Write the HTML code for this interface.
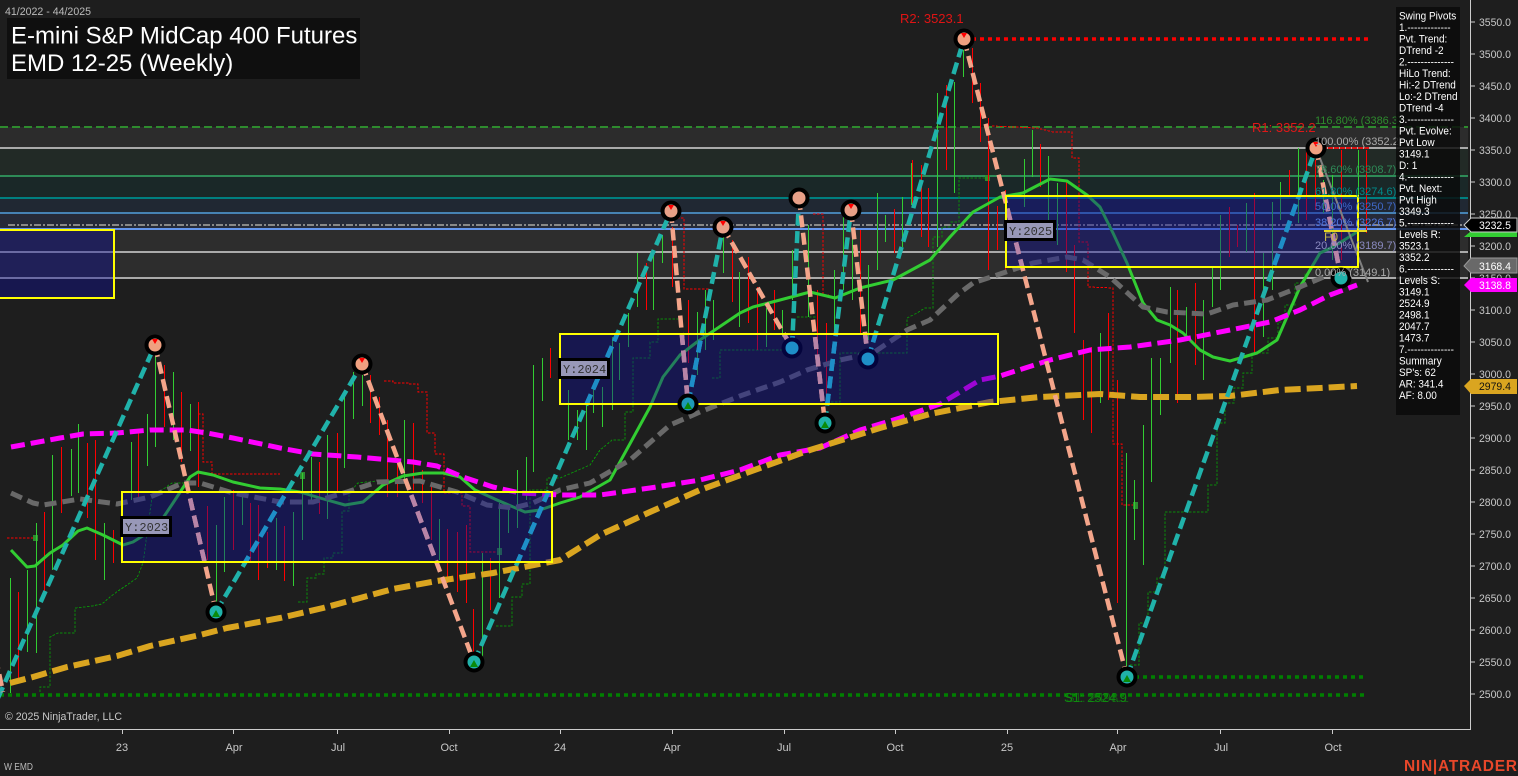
<!DOCTYPE html>
<html lang="en"><head><meta charset="utf-8"><title>EMD 12-25 (Weekly)</title>
<style>html,body{margin:0;padding:0;background:#1e1e1e;width:1518px;height:776px;overflow:hidden}svg{display:block;font-family:"Liberation Sans",Arial,sans-serif}</style></head>
<body>
<svg width="1518" height="776" viewBox="0 0 1518 776" xmlns="http://www.w3.org/2000/svg">
<defs>
<clipPath id="boxes"><rect x="0" y="230" width="114" height="68"/><rect x="122" y="492" width="430" height="70"/><rect x="560" y="334" width="438" height="70"/><rect x="1006" y="196" width="352" height="71"/></clipPath>
<path id="zt" d="M-2 698L155 345M216 612L362 364M474 662L671 211M688 404L723 227M792 348L799 198M825 423L851 210M868 359L964 39M1127 677L1316 148" fill="none" stroke-width="4.500" stroke-dasharray="12 5.500"/>
<path id="zs" d="M-8 640L3 692M155 345L216 612M362 364L474 662M671 211L688 404M723 227L792 348M799 198L825 423M851 210L868 359M964 39L1127 677M1316 148L1341 278" fill="none" stroke-width="4.500" stroke-dasharray="12 5.500"/>
</defs>
<rect width="1518" height="776" fill="#1e1e1e"/>
<!-- fib bands -->
<rect x="0" y="127" width="1468" height="21" fill="#2c2c2c"/>
<rect x="0" y="148" width="1468" height="28" fill="#222a26"/>
<rect x="0" y="176" width="1468" height="22" fill="#1a2828"/>
<rect x="0" y="198" width="1468" height="15" fill="#202833"/>
<rect x="0" y="213" width="1468" height="16" fill="#262a38"/>
<rect x="0" y="229" width="1468" height="49" fill="#2d2d2d"/>
<g fill="none" shape-rendering="crispEdges">
<path d="M0 127H1468" stroke="#2e8b2e" stroke-width="2" stroke-dasharray="8 4"/>
<path d="M0 148H1468" stroke="#aaa" stroke-width="2"/>
<path d="M0 176H1468" stroke="#2e8b57" stroke-width="2"/>
<path d="M0 198H1468" stroke="#008080" stroke-width="2"/>
<path d="M0 213H1468" stroke="#4682b4" stroke-width="2"/>
<path d="M8 225H1468" stroke="#888" stroke-width="2" stroke-dasharray="7 2 2 2"/>
<path d="M0 229H1468" stroke="#6495ed" stroke-width="2"/>
<path d="M0 252H1468" stroke="#aaa" stroke-width="2"/>
<path d="M0 278H1468" stroke="#aaa" stroke-width="2"/>
</g>
<!-- trailing stops -->
<g fill="none" stroke-width="1" stroke-dasharray="2.500 1.500" shape-rendering="crispEdges">
<path stroke="#0a8a0a" d="M40 692V687H50V637L58 633H75V608L92 606 102 604 110 597 118 591 127 585 137 578 143 563 152 497 172 483H190M298 602H307V578H316V574H324V558H333V553H342V511H349V493L358 483 377 481M496 626H512V597H522V584H530V553 490H547V478H560L590 465 600 450 612 440H625V412H633V358H650V342H658V319H678M712 378H720V350H782M797 317H817M827 402H840V353H907V318L917 313 925 308H933V237H942V227H951V222H959V178H988M1130 665H1139V623H1148V592H1157V578H1165V512H1208V485H1217V423H1225V403H1234V388H1243V373H1252V353H1268V338H1278V322H1285V305H1295V283H1305V273"/>
<path stroke="#ff0000" d="M7 538H33M198 414H203V462H212V474H280M384 381H393V383H409V384H418V392H427V433H435V454H444V493H462V506H470V552H498M673 218H684V289H710M813 214H823V295H829M992 126L1037 128 1045 130 1053 132H1072V158H1079V242H1088V287L1113 288V444H1122V505H1134"/>
</g>
<path d="M33 535h5v6h-5zM300 472h5v7h-5zM1133 502h5v7h-5zM497 548h5v7h-5zM985 175h5v6h-5z" fill="#2e8b2e"/>
<!-- bars -->
<g fill="none" stroke-width="1" shape-rendering="crispEdges">
<path stroke="#32cd32" d="M10.500 578V693M27.500 570V652M36.500 523V653M52.500 455V570M71.500 449V496M78.500 424V493M104.500 523V580M131.500 442V500M147.500 414V466M155.500 350V447M173.500 372V440M190.500 404V451M216.500 525V603M224.500 497V572M242.500 495V525M276.500 518V570M293.500 512V586M302.500 473V540M311.500 457V500M327.500 435V519M344.500 392V468M353.500 372V419M362.500 375V406M404.500 420V480M439.500 519V560M482.500 553V657M499.500 503V598M508.500 510V533M517.500 470V528M526.500 457V500M533.500 365V472M542.500 358V401M568.500 390V440M577.500 410V440M586.500 400V450M593.500 387V413M602.500 387V427M612.500 337V410M619.500 343V380M628.500 313V347M637.500 253V307M653.500 250V310M662.500 235V263M697.500 312V375M705.500 290V350M713.500 300V340M723.500 233V273M739.500 272V327M766.500 308V347M782.500 310V337M792.500 250V300M808.500 225V317M834.500 270V330M843.500 217V290M852.500 230V300M868.500 265V340M877.500 193V270M885.500 215V242M902.500 197V247M911.500 163V205M937.500 93V247M954.500 82V193M963.500 50V77M1024.500 159V207M1032.500 130V177M1048.500 156V220M1057.500 183V245M1100.500 333V403M1126.500 453V667M1134.500 480V540M1143.500 425V565M1151.500 358V482M1160.500 358V415M1170.500 287V363M1186.500 307V340M1203.500 300V380M1212.500 268V307M1220.500 215V290M1246.500 203V252M1263.500 253V337M1272.500 202V290M1280.500 182V220M1298.500 148V223M1323.500 180V213M1332.500 175V260M1358.500 150V253"/>
<path stroke="#ff0000" d="M18.500 592V680M44.500 512V597M61.500 447V513M87.500 443V518M95.500 440V560M113.500 530V563M138.500 432V497M164.500 365V427M181.500 392V462M198.500 402V487M207.500 506V560M233.500 490V550M250.500 503V562M258.500 505V580M267.500 532V568M284.500 526V581M319.500 462V514M337.500 433V492M370.500 375V423M379.500 397V435M387.500 420V497M397.500 458V497M413.500 423V490M422.500 470V503M431.500 483V540M447.500 529V583M457.500 532V592M466.500 525V603M473.500 609V653M490.500 558V610M550.500 348V378M559.500 360V400M646.500 263V310M672.500 227V287M688.500 300V363M732.500 240V302M748.500 257V323M757.500 287V350M774.500 290V330M817.500 290V360M826.500 323V400M860.500 230V333M894.500 209V253M912.500 160V207M921.500 165V237M928.500 188V247M946.500 85V170M972.500 48V103M980.500 83V142M988.500 118V270M997.500 206V250M1005.500 190V270M1040.500 144V187M1066.500 182V272M1074.500 245V333M1083.500 340V420M1091.500 347V433M1108.500 313V400M1117.500 380V603M1177.500 290V403M1195.500 283V365M1229.500 207V257M1237.500 225V247M1254.500 193V353M1289.500 170V195M1306.500 150V220M1315.500 160V210M1341.500 150V260M1366.500 150V233"/>
</g>
<!-- moving averages -->
<g fill="none" stroke-linejoin="round">
<path stroke="#32cd32" stroke-width="3" d="M11 550L27 567 35 566 50 553 63 545 78 531 87 528 103 535 123 545 133 542 157 527 173 503 190 477 198 472 213 475 233 482 260 488 280 489 300 492 320 498 345 505 363 502 383 485 403 476 423 473 443 473 460 477 475 490 497 500 525 512 540 510 560 503 580 497 610 480 632 440 650 407 663 377 680 355 697 342 740 313 753 307 780 300 810 292 835 298 860 288 893 280 930 260 950 237 973 212 1000 197 1023 193 1050 179 1067 181 1087 195 1100 207 1113 233 1127 263 1143 303 1157 320 1170 325 1183 333 1200 350 1213 357 1230 361 1257 353 1277 340 1290 310 1300 287 1320 253 1333 247 1357 232"/>
<path stroke="#696969" stroke-width="5" stroke-dasharray="12 6" d="M11 493L33 503 43 505 80 499 117 504 150 497 183 483 200 483 233 493 280 502 313 502 347 492 377 482 420 481 457 492 487 505 513 508 533 503 560 490 590 483 630 460 670 425 700 412 740 396 780 382 807 370 840 360 873 353 907 330 930 320 957 295 973 283 1000 274 1033 263 1067 257 1083 260 1110 277 1143 307 1167 312 1207 314 1233 305 1267 300 1300 287 1333 273 1350 270"/>
<path stroke="#ff00ff" stroke-width="5" stroke-dasharray="14 6" d="M11 447L33 443 60 438 83 434 117 433 150 430 187 430 207 433 233 438 280 448 313 454 357 457 413 462 437 466 463 477 493 487 520 493 560 495 600 495 650 488 700 480 740 470 780 455 820 448 860 430 900 418 940 404 980 380 1000 376 1050 360 1090 350 1130 347 1180 340 1230 330 1270 322 1300 310 1330 295 1357 285"/>
<path stroke="#daa520" stroke-width="6" stroke-dasharray="16 6" d="M10 683L33 677 67 667 117 656 150 646 200 635 227 628 280 618 293 615 323 608 360 598 393 589 437 581 493 573 560 560 600 535 650 512 700 490 760 468 810 450 880 428 930 414 990 402 1040 397 1100 394 1140 397 1190 397 1230 396 1280 390 1320 388 1357 386"/>
</g>
<!-- levels -->
<g fill="none" stroke-width="3.500">
<path d="M964 39H1368" stroke="#ff0000" stroke-dasharray="4 4"/>
<path d="M1316 148H1370" stroke="#dd1111" stroke-width="2" stroke-dasharray="5 1"/>
<path d="M0 695H1366" stroke="#008000" stroke-dasharray="4 4"/>
<path d="M1127 677H1366" stroke="#008000" stroke-dasharray="4 4"/>
</g>
<!-- boxes -->
<g fill="#0c0c98" fill-opacity=".4">
<rect x="-2" y="230" width="116" height="68"/><rect x="122" y="492" width="430" height="70"/><rect x="560" y="334" width="438" height="70"/><rect x="1006" y="196" width="352" height="71"/>
</g>
<!-- gray line & zigzags -->
<path d="M1316 148L1368 282" stroke="#808080" stroke-width="2" fill="none"/>
<use href="#zt" stroke="#20b2aa"/>
<use href="#zs" stroke="#f4a58a"/>
<g clip-path="url(#boxes)">
<use href="#zt" stroke="#1e8ec8"/>
<use href="#zs" stroke="#b884a8"/>
</g>
<!-- box borders -->
<g fill="none" stroke="#ffff00" stroke-width="2" shape-rendering="crispEdges">
<rect x="-2" y="230" width="116" height="68"/><rect x="122" y="492" width="430" height="70"/><rect x="560" y="334" width="438" height="70"/><rect x="1006" y="196" width="352" height="71"/>
</g>
<path d="M1324 231H1367" stroke="#e6d820" stroke-width="2"/>
<text x="1324" y="241" font-size="12" fill="#c8b84a">F0</text>
<!-- pivots -->
<g stroke="#000" stroke-width="4">
<circle cx="155" cy="345" r="8.500" fill="#f0a080"/><circle cx="362" cy="364" r="8.500" fill="#f0a080"/><circle cx="671" cy="211" r="8.500" fill="#e8a088"/><circle cx="723" cy="227" r="8.500" fill="#e8a088"/><circle cx="799" cy="198" r="8.500" fill="#e8a088"/><circle cx="851" cy="210" r="8.500" fill="#e8a088"/><circle cx="964" cy="39" r="8.500" fill="#f0a080"/><circle cx="1316" cy="148" r="8.500" fill="#f0a080"/>
<circle cx="216" cy="612" r="8.500" fill="#20b2aa"/><circle cx="474" cy="662" r="8.500" fill="#20b2aa"/><circle cx="825" cy="423" r="8.500" fill="#20b2aa"/><circle cx="1127" cy="677" r="8.500" fill="#20b2aa"/><circle cx="1341" cy="278" r="8.500" fill="#20b2aa"/>
<circle cx="688" cy="404" r="8.500" fill="#1e9ab8"/>
</g>
<g stroke="#04043c" stroke-width="4">
<circle cx="792" cy="348" r="8.500" fill="#1e8ec8"/><circle cx="868" cy="359" r="8.500" fill="#1e8ec8"/>
</g>
<g fill="#ff0000">
<path d="M152 339h6l-3 5zM359 358h6l-3 5zM668 205h6l-3 5zM720 221h6l-3 5zM848 204h6l-3 5zM961 33h6l-3 5zM1313 142h6l-3 5z"/>
</g>
<g fill="#0a8a0a">
<path d="M216 610l4 7h-8zM474 660l4 7h-8zM825 421l4 7h-8zM1127 675l4 7h-8zM688 402l4 7h-8z"/>
</g>
<!-- fib labels -->
<g font-size="11">
<text x="1315" y="124" fill="#2e8b2e">116.80% (3386.3)</text>
<text x="1315" y="145" fill="#aaa">100.00% (3352.2)</text>
<text x="1315" y="173" fill="#2e8b57">78.60% (3308.7)</text>
<text x="1315" y="195" fill="#008a8a">61.80% (3274.6)</text>
<text x="1315" y="210" fill="#3f68c8">50.00% (3250.7)</text>
<text x="1315" y="226" fill="#5078e0">38.20% (3226.7)</text>
<text x="1315" y="249" fill="#8a8ac0">20.00% (3189.7)</text>
<text x="1315" y="276" fill="#aaa">0.00% (3149.1)</text>
</g>
<!-- Y labels -->
<g font-family="'Liberation Mono',monospace" font-size="12" fill="#333">
<rect x="121.500" y="517.500" width="49" height="18" fill="#9898b8" stroke="#000" stroke-width="3"/><text x="125" y="531">Y:2023</text>
<rect x="559.500" y="359.500" width="49" height="18" fill="#9898b8" stroke="#000" stroke-width="3"/><text x="563" y="373">Y:2024</text>
<rect x="1005.500" y="221.500" width="49" height="18" fill="#9898b8" stroke="#000" stroke-width="3"/><text x="1009" y="235">Y:2025</text>
</g>
<!-- level text -->
<text x="900" y="23" font-size="13" fill="#e01414">R2: 3523.1</text>
<text x="1252" y="132" font-size="13" fill="#e01818">R1: 3352.2</text>
<text x="1064" y="702" font-size="13" fill="#0f8a0f">S1: 2524.9</text>
<text x="1066" y="702" font-size="13" fill="#0f8a0f" opacity=".6">S1: 2498.1</text>
<!-- top-left -->
<text x="5" y="15" font-size="11" fill="#bbb" textLength="86" lengthAdjust="spacingAndGlyphs">41/2022 - 44/2025</text>
<rect x="7" y="18" width="353" height="61" fill="#0f0f0f"/>
<text x="11" y="43.500" font-size="24" fill="#fff">E-mini S&amp;P MidCap 400 Futures</text>
<text x="11" y="71" font-size="24" fill="#fff">EMD 12-25 (Weekly)</text>
<!-- info panel -->
<rect x="1396" y="7" width="64" height="408" fill="#0a0a0a" fill-opacity=".82"/>
<g font-size="11" fill="#fff" transform="translate(1399 0) scale(.91 1)">
<text y="19.500">Swing Pivots</text>
<text y="31">1.-------------</text>
<text y="42.500">Pvt. Trend:</text>
<text y="54">DTrend -2</text>
<text y="65.500">2.--------------</text>
<text y="77">HiLo Trend:</text>
<text y="88.500">Hi:-2 DTrend</text>
<text y="100">Lo:-2 DTrend</text>
<text y="111.500">DTrend -4</text>
<text y="123">3.--------------</text>
<text y="134.500">Pvt. Evolve:</text>
<text y="146">Pvt Low</text>
<text y="157.500">3149.1</text>
<text y="169">D: 1</text>
<text y="180.500">4.--------------</text>
<text y="192">Pvt. Next:</text>
<text y="203.500">Pvt High</text>
<text y="215">3349.3</text>
<text y="226.500">5.--------------</text>
<text y="238">Levels R:</text>
<text y="249.500">3523.1</text>
<text y="261">3352.2</text>
<text y="272.500">6.--------------</text>
<text y="284">Levels S:</text>
<text y="295.500">3149.1</text>
<text y="307">2524.9</text>
<text y="318.500">2498.1</text>
<text y="330">2047.7</text>
<text y="341.500">1473.7</text>
<text y="353">7.--------------</text>
<text y="364.500">Summary</text>
<text y="376">SP's: 62</text>
<text y="387.500">AR: 341.4</text>
<text y="399">AF: 8.00</text>
</g>
<!-- axes -->
<rect x="1470" y="0" width="48" height="776" fill="#1e1e1e"/>
<rect x="0" y="730" width="1470" height="46" fill="#1e1e1e"/>
<path d="M1470.500 0V729.500H0" stroke="#ccc" fill="none" shape-rendering="crispEdges"/>
<g stroke="#ccc" shape-rendering="crispEdges">
<path d="M1470 22h5M1470 54h5M1470 86h5M1470 118h5M1470 150h5M1470 182h5M1470 214h5M1470 246h5M1470 278h5M1470 310h5M1470 342h5M1470 374h5M1470 406h5M1470 438h5M1470 470h5M1470 502h5M1470 534h5M1470 566h5M1470 598h5M1470 630h5M1470 662h5M1470 694h5"/>
<path d="M122.500 729v5M233.500 729v5M337.500 729v5M449.500 729v5M560.500 729v5M672.500 729v5M784.500 729v5M895.500 729v5M1007.500 729v5M1117.500 729v5M1220.500 729v5M1332.500 729v5"/>
</g>
<g font-size="11" fill="#c8c8c8" transform="translate(1479 0) scale(.95 1)">
<text y="26">3550.0</text><text y="58">3500.0</text><text y="90">3450.0</text><text y="122">3400.0</text><text y="154">3350.0</text><text y="186">3300.0</text><text y="218">3250.0</text><text y="250">3200.0</text><text y="282">3150.0</text><text y="314">3100.0</text><text y="346">3050.0</text><text y="378">3000.0</text><text y="410">2950.0</text><text y="442">2900.0</text><text y="474">2850.0</text><text y="506">2800.0</text><text y="538">2750.0</text><text y="570">2700.0</text><text y="602">2650.0</text><text y="634">2600.0</text><text y="666">2550.0</text><text y="698">2500.0</text>
</g>
<g font-size="11" fill="#c8c8c8" text-anchor="middle">
<text x="122" y="751">23</text><text x="234" y="751">Apr</text><text x="338" y="751">Jul</text><text x="449" y="751">Oct</text><text x="560" y="751">24</text><text x="672" y="751">Apr</text><text x="784" y="751">Jul</text><text x="895" y="751">Oct</text><text x="1007" y="751">25</text><text x="1118" y="751">Apr</text><text x="1221" y="751">Jul</text><text x="1333" y="751">Oct</text>
</g>
<!-- price tags -->
<polygon points="1464,237 1471,231 1517,231 1517,237 1471,237" fill="#32cd32"/>
<polygon points="1464,225 1471,218 1517,218 1517,232 1471,232" fill="#000" stroke="#ccc"/>
<polygon points="1464,266 1471,258 1517,258 1517,273 1471,273" fill="#696969" stroke="#999"/>
<polygon points="1464,285 1471,278 1517,278 1517,292 1471,292" fill="#ff00ff"/>
<polygon points="1464,386 1471,379 1517,379 1517,394 1471,394" fill="#daa520"/>
<g font-size="11" transform="translate(1479 0) scale(.95 1)">
<text y="229" fill="#fff">3232.5</text>
<text y="270" fill="#fff">3168.4</text>
<text y="289" fill="#fff">3138.8</text>
<text y="390" fill="#111">2979.4</text>
</g>
<!-- bottom text -->
<text x="5" y="720" font-size="11" fill="#c8c8c8" textLength="117" lengthAdjust="spacingAndGlyphs">© 2025 NinjaTrader, LLC</text>
<text x="4" y="770" font-size="10" fill="#bbb" textLength="29" lengthAdjust="spacingAndGlyphs">W EMD</text>
<text x="1404" y="771" font-size="15.500" font-weight="700" fill="#e8472a" textLength="113" lengthAdjust="spacing">NIN|ATRADER</text>
</svg>
</body></html>
